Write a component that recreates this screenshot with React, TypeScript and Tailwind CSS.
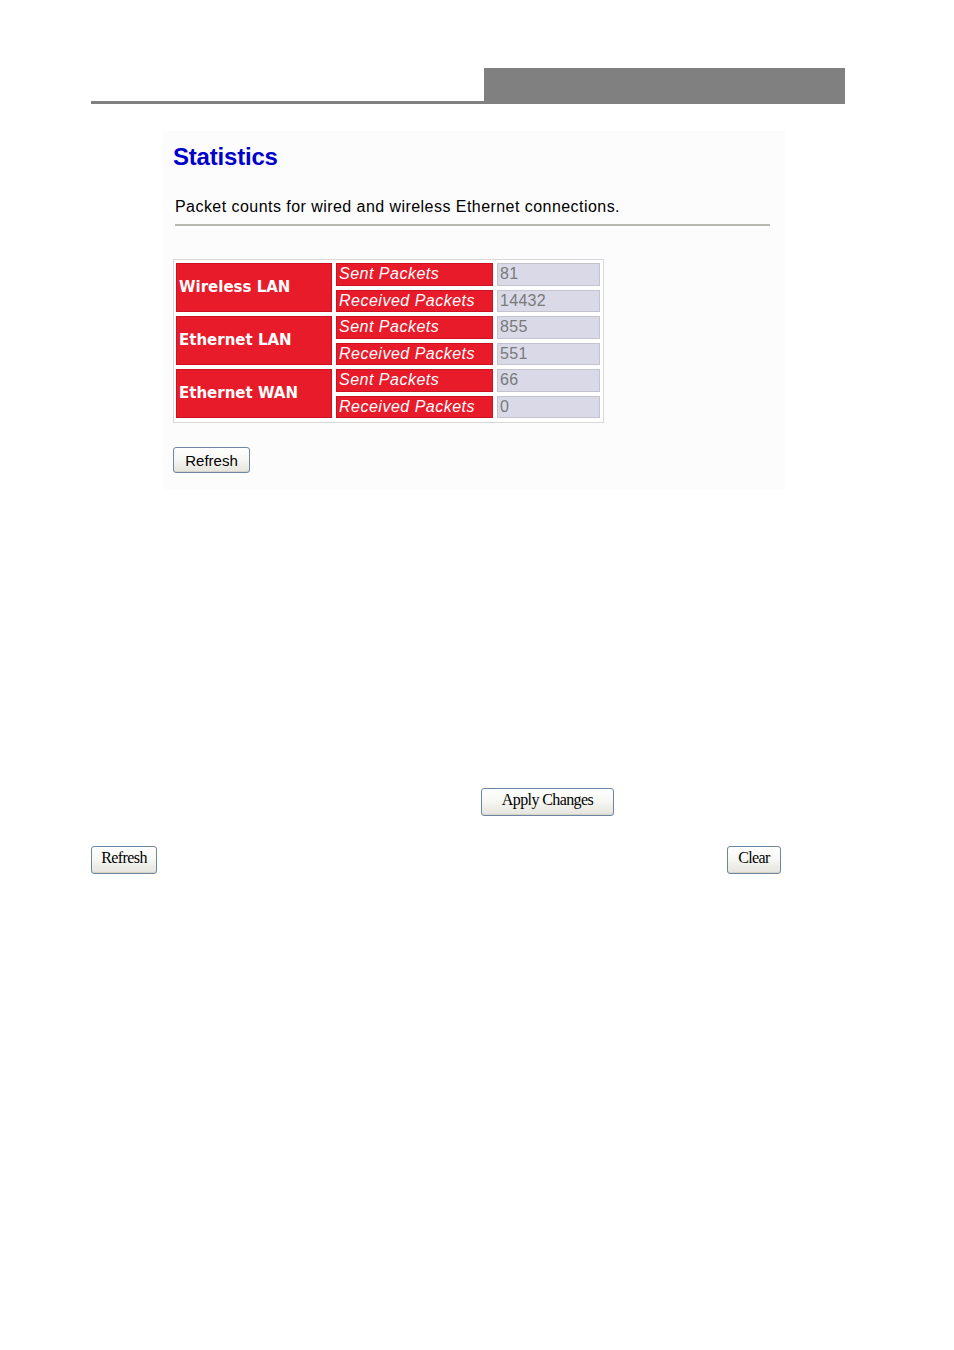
import React from 'react';

interface StatRow {
  name: string;
  sent: string;
  received: string;
}

const rows: StatRow[] = [
  { name: 'Wireless LAN', sent: '81', received: '14432' },
  { name: 'Ethernet LAN', sent: '855', received: '551' },
  { name: 'Ethernet WAN', sent: '66', received: '0' },
];

const xpButton =
  'border border-[#6d86a3] rounded-[3px] bg-gradient-to-b from-white via-[#f6f6f2] to-[#e4e3dc] text-black shadow-[inset_0_-1px_0_#d6d4c8]';

export default function App() {
  return (
    <div className="w-[954px] h-[1350px] bg-white pt-[68px]">
      {/* header bar */}
      <div className="ml-[91px] w-[754px] h-[36px] flex">
        <div className="w-[393px] flex flex-col justify-end">
          <div className="h-[3px] bg-[#808080]" />
        </div>
        <div className="flex-1 bg-[#808080]" />
      </div>

      {/* statistics panel */}
      <div className="ml-[162px] mt-[27px] w-[623px] h-[359px] bg-[#fcfcfc] pl-[11px] pt-[12px]">
        <h1 className="text-[24px] leading-[28px] font-bold text-[#0000cc] tracking-[-0.2px] [font-family:'Liberation_Sans',Arial,sans-serif]">
          Statistics
        </h1>
        <p className="mt-[26px] ml-[2px] text-[16px] leading-[20px] tracking-[0.45px] text-black [font-family:'Liberation_Sans',Arial,sans-serif]">
          Packet counts for wired and wireless Ethernet connections.
        </p>
        <div className="mt-[7px] ml-[2px] w-[595px] border-t-2 border-[#b8b8b0]" />

        <div className="mt-[33px] grid w-fit grid-cols-[156px_157px_103px] grid-rows-[repeat(6,22.5px)] gap-[4px] border border-[#d8d8d8] pt-[3px] pl-[2px] pr-[3px] pb-[4px] bg-white">
          {rows.map((row) => (
            <React.Fragment key={row.name}>
              <div className="row-span-2 bg-[#e81b2a] border border-[#cf1020] flex items-center pl-[2px] text-white font-bold text-[15px] [font-family:'DejaVu_Sans',Verdana,sans-serif]">
                {row.name}
              </div>
              <div className="bg-[#e81b2a] border border-[#cf1020] flex items-center pl-[2px] text-white italic text-[16px] tracking-[0.5px] [font-family:'Liberation_Sans',Arial,sans-serif]">
                Sent Packets
              </div>
              <div className="bg-[#d9d9e7] border border-[#c4c4d0] flex items-center pl-[2px] text-[#7a7a7a] text-[16px] tracking-[0.3px] [font-family:'Liberation_Sans',Arial,sans-serif]">
                {row.sent}
              </div>
              <div className="bg-[#e81b2a] border border-[#cf1020] flex items-center pl-[2px] text-white italic text-[16px] tracking-[0.5px] [font-family:'Liberation_Sans',Arial,sans-serif]">
                Received Packets
              </div>
              <div className="bg-[#d9d9e7] border border-[#c4c4d0] flex items-center pl-[2px] text-[#7a7a7a] text-[16px] tracking-[0.3px] [font-family:'Liberation_Sans',Arial,sans-serif]">
                {row.received}
              </div>
            </React.Fragment>
          ))}
        </div>

        <div className="mt-[24px]">
          <button
            type="button"
            className={`${xpButton} w-[77px] h-[26px] text-[15px] leading-none [font-family:'Liberation_Sans',Arial,sans-serif]`}
          >
            Refresh
          </button>
        </div>
      </div>

      {/* lower buttons */}
      <div className="mt-[297px] ml-[481px]">
        <button
          type="button"
          className={`${xpButton} w-[133px] h-[28px] pb-[3px] text-[16px] leading-none tracking-[-0.6px] [font-family:'Liberation_Serif','Times_New_Roman',serif]`}
        >
          Apply Changes
        </button>
      </div>

      <div className="mt-[30px] ml-[91px] w-[690px] flex justify-between">
        <button
          type="button"
          className={`${xpButton} w-[66px] h-[28px] pb-[3px] text-[16px] leading-none tracking-[-0.6px] [font-family:'Liberation_Serif','Times_New_Roman',serif]`}
        >
          Refresh
        </button>
        <button
          type="button"
          className={`${xpButton} w-[54px] h-[28px] pb-[3px] text-[16px] leading-none tracking-[-0.6px] [font-family:'Liberation_Serif','Times_New_Roman',serif]`}
        >
          Clear
        </button>
      </div>
    </div>
  );
}
